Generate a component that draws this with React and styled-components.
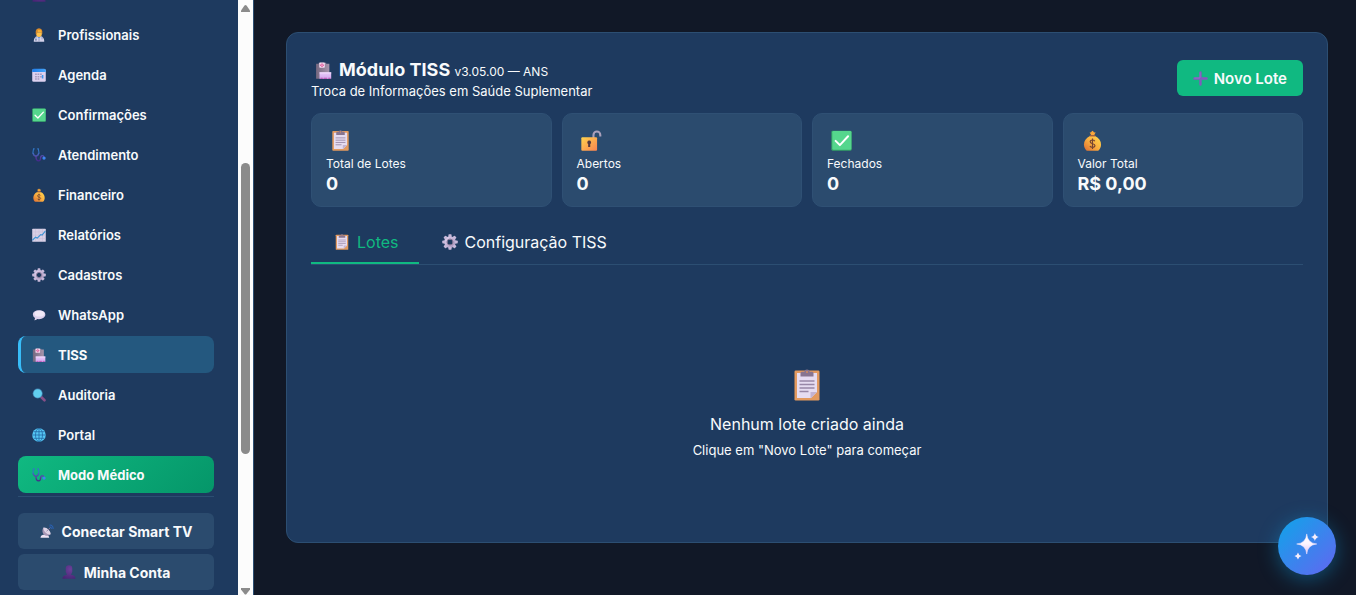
import React from 'react';
import styled, { createGlobalStyle, css, ThemeProvider } from 'styled-components';

const theme = {
  page: '#111827',
  panel: '#1e3a5f',
  raised: '#2b4b6e',
  line: '#2c4e72',
  green: '#10b981',
  text: '#f8fafc',
};

const GlobalStyle = createGlobalStyle`
  *, *::before, *::after {
    box-sizing: border-box;
  }
  body {
    margin: 0;
    background: ${theme.page};
    color: ${theme.text};
    font-family: Inter, 'Liberation Sans', sans-serif;
    font-size: 14px;
  }
  button {
    font-family: inherit;
    color: inherit;
    border: 0;
    cursor: pointer;
  }
  h1, p {
    margin: 0;
  }
`;

/* ---------- icons ---------- */

const Svg = styled.svg`
  display: block;
  flex: none;
  width: ${({ $size }) => $size}px;
  height: ${({ $size }) => $size}px;
`;

const Icon = ({ size = 16, children }) => (
  <Svg $size={size} viewBox="0 0 32 32" aria-hidden="true">
    {children}
  </Svg>
);

const Defs = styled.svg`
  position: absolute;
`;

const Gradients = () => (
  <Defs width="0" height="0" aria-hidden="true">
    <defs>
      <linearGradient id="gold" x1="1" y1="0" x2="0" y2="1">
        <stop offset="0" stopColor="#ffd84d" />
        <stop offset="0.5" stopColor="#fbb040" />
        <stop offset="1" stopColor="#dd6b32" />
      </linearGradient>
      <linearGradient id="lock" x1="0" y1="0" x2="1" y2="1">
        <stop offset="0" stopColor="#ffd34d" />
        <stop offset="1" stopColor="#fb8350" />
      </linearGradient>
      <linearGradient id="gear" x1="0" y1="0" x2="1" y2="1">
        <stop offset="0" stopColor="#e0d2f0" />
        <stop offset="1" stopColor="#a994bb" />
      </linearGradient>
      <linearGradient id="scope" x1="0" y1="0" x2="0" y2="1">
        <stop offset="0" stopColor="#3a6fc0" />
        <stop offset="0.5" stopColor="#5b3fa0" />
        <stop offset="1" stopColor="#44288c" />
      </linearGradient>
      <linearGradient id="header" x1="0" y1="0" x2="1" y2="0">
        <stop offset="0" stopColor="#1f7ce8" />
        <stop offset="1" stopColor="#45a5fa" />
      </linearGradient>
      <linearGradient id="hospital" x1="0" y1="0" x2="1" y2="0">
        <stop offset="0" stopColor="#74677f" />
        <stop offset="1" stopColor="#a795ad" />
      </linearGradient>
      <linearGradient id="annex" x1="0" y1="0" x2="0" y2="1">
        <stop offset="0" stopColor="#e9cdfb" />
        <stop offset="1" stopColor="#d3a6ee" />
      </linearGradient>
      <radialGradient id="person" cx="0.6" cy="0.3" r="0.9">
        <stop offset="0" stopColor="#6b4099" />
        <stop offset="1" stopColor="#432270" />
      </radialGradient>
      <linearGradient id="spark" x1="0" y1="0" x2="0" y2="1">
        <stop offset="0" stopColor="#fff" />
        <stop offset="0.5" stopColor="#fbf4ff" />
        <stop offset="1" stopColor="#dcc0f6" />
      </linearGradient>
    </defs>
  </Defs>
);

const Clipboard = ({ size }) => (
  <Icon size={size}>
    <rect x="3.5" y="1.5" width="25" height="30" rx="1.2" fill="#e39a5f" />
    <path d="M6 4h20v19l-6 6H6z" fill="#e6dcf1" />
    <path d="M19.5 29.5v-6.5H26z" fill="#c3b3d2" />
    <path d="M9.5 7.5V4.2q0-1.4 1.5-1.4h2.3q.3-2.3 2.7-2.3t2.7 2.3H21q1.5 0 1.5 1.4v3.300z" fill="#887590" />
    <circle cx="16" cy="3" r="1" fill="#d68e5b" />
    <path d="M8.500 12h15M8.500 15.500h15M8.500 19h15M8.500 22.500h9" stroke="#9887a7" strokeWidth="1.300" />
  </Icon>
);

const CheckBox = ({ size }) => (
  <Icon size={size}>
    <rect x="0.500" y="1" width="31" height="30.500" rx="2" fill="#35a567" />
    <rect x="2" y="1.500" width="29" height="28.500" rx="2" fill="#55d68d" />
    <path d="M7 16.500l6.500 6.500L26 9.500" fill="none" stroke="#fff" strokeWidth="3" strokeLinecap="round" strokeLinejoin="round" />
  </Icon>
);

const MoneyBag = ({ size }) => (
  <Icon size={size}>
    <path d="M12 9h8c6 3 9 7.500 9 13 0 4-1.700 7.500-4.200 9.500H7.200C4.700 29.500 3 26 3 22c0-5.500 3-10 9-13z" fill="url(#gold)" />
    <path d="M11.500 3.500q2 1 3.500-1.500 1-1.500 2 0 1.500 2.500 4 1.500l-2.500 4.500h-4.500z" fill="#f9a63a" />
    <path d="M12.500 9h7" stroke="#b7653a" strokeWidth="2" strokeLinecap="round" />
    <path d="M19.500 17c-.7-1.300-1.800-1.800-3.500-1.800-2.200 0-3.500 1-3.500 2.800 0 4 7.200 1.800 7.200 5.600 0 1.800-1.500 2.900-3.700 2.900-2 0-3.300-.7-3.900-2.100M16 13v16" fill="none" stroke="#754332" strokeWidth="1.800" />
  </Icon>
);

const Padlock = ({ size }) => (
  <Icon size={size}>
    <path d="M19 12V7.500a5.200 5.200 0 0 1 10.400 0V10" fill="none" stroke="#aaa0bb" strokeWidth="3.200" />
    <rect x="0.500" y="11" width="24" height="20.500" rx="1.500" fill="url(#lock)" />
    <path d="M12.500 16a3 3 0 0 1 1.600 5.500v4.500h-3.200v-4.500A3 3 0 0 1 12.500 16z" fill="#55383f" />
  </Icon>
);

const Gear = ({ size }) => (
  <Icon size={size}>
    <circle cx="16" cy="16" r="8.500" fill="none" stroke="url(#gear)" strokeWidth="6.500" />
    {[0, 45, 90, 135, 180, 225, 270, 315].map(angle => (
      <rect key={angle} x="12.800" y="0.500" width="6.400" height="6" rx="1.500" fill="#c8b9da" transform={`rotate(${angle} 16 16)`} />
    ))}
    <circle cx="16" cy="16" r="6" fill="none" stroke="#80708f" strokeWidth="1.800" />
  </Icon>
);

const Hospital = ({ size }) => (
  <Icon size={size}>
    <path d="M2 3.500h5V1.500h14v2h6v28H2z" fill="url(#hospital)" />
    <rect x="8" y="1" width="10.500" height="10" rx="1.500" fill="#f1d9ee" />
    <path d="M13.200 2.600v7M9.700 6.100h7" stroke="#e0599c" strokeWidth="2.800" />
    <circle cx="13.200" cy="6.100" r="1.200" fill="#f6d3e8" />
    <rect x="8.500" y="19.500" width="22" height="12" fill="url(#annex)" />
    <path d="M8.500 20.500h22" stroke="#f1dcfd" strokeWidth="2" />
    <path d="M10.500 30.500h4M16.500 30.500h6M25 30.500h4" stroke="#c04cb4" strokeWidth="2" />
  </Icon>
);

const Doctor = ({ size }) => (
  <Icon size={size}>
    <path d="M4 31.500c0-9 4-13.500 12-13.500s12 4.500 12 13.500z" fill="#d3d2ea" />
    <path d="M11 18l5 7 5-7z" fill="#6f99dc" />
    <path d="M9 20v6M23 20v6M16 25v6" stroke="#7f8bb2" strokeWidth="1.600" />
    <circle cx="9" cy="27" r="2" fill="#7182a9" />
    <path d="M9.500 9.500h13v4q0 7-6.500 7t-6.500-7z" fill="#ffc14a" />
    <path d="M8.500 14V7q1-6 7.500-6.500 6.500.5 7.500 6.500v7l-2.500-5q-5 1-8-1.500L11 14z" fill="#d98a2c" />
    <path d="M12 9l2-5 7 1 1 5z" fill="#f9b034" />
  </Icon>
);

const Calendar = ({ size }) => (
  <Icon size={size}>
    <rect x="0.500" y="3" width="31" height="28.500" rx="3" fill="#ddd1ef" />
    <path d="M.5 9V5Q.5 1.500 4 1.500h24q3.500 0 3.500 3.500v4z" fill="url(#header)" />
    <path d="M7 12.500h4V16H7zM12.700 12.500h4V16h-4zM18.400 12.500h4V16h-4zM7 18h4v3.500H7zM12.700 18h4v3.500h-4zM18.400 18h4v3.500h-4zM7 23.500h4V27H7zM12.700 23.500h4V27h-4z" fill="#a89cbe" />
    <path d="M22.500 16h3.500v8h-3.500z" fill="#3e98ee" />
  </Icon>
);

const Stethoscope = ({ size }) => (
  <Icon size={size}>
    <path d="M6 2H3.500L2 11q1 6 7 8 6-2 7-8l-1.500-9H12" fill="none" stroke="#3177c7" strokeWidth="2.400" />
    <path d="M2.500 11q1 7 6.500 8 5.500-1 6.500-8M9 19c0 7 2 10.500 6.500 10.500 7 0 1-12 8-12 3 0 3.500 2 3.500 4" fill="none" stroke="url(#scope)" strokeWidth="3" />
    <circle cx="27.500" cy="23" r="3.800" fill="#3f83f0" />
  </Icon>
);

const Chart = ({ size }) => (
  <Icon size={size}>
    <rect x="0.500" y="1.500" width="31" height="30" rx="1.500" fill="#d9d0e6" />
    <path d="M8 2v28M16 2v28M24 2v28M1 9h30M1 16.500h30M1 24h30" stroke="#c5b9d3" strokeWidth="1" />
    <path d="M1 28l7-7 4 2 8-8 3 1L30.500 7" fill="none" stroke="#3a93d4" strokeWidth="2.600" />
  </Icon>
);

const Bubble = ({ size }) => (
  <Icon size={size}>
    <path d="M16 5c8.500 0 14.500 4.200 14.500 10S24.500 25.500 16 25.500q-2 0-4-.3-2.500 3-7 3 2-2.200 1.800-5.200Q2 20 2 15C2 9.200 7.500 5 16 5z" fill="#ddd0ec" />
    <ellipse cx="17" cy="13" rx="11" ry="6.500" fill="#f0e8f7" />
  </Icon>
);

const Lens = ({ size }) => (
  <Icon size={size}>
    <path d="M21 20.500l7.500 7.500" stroke="#855088" strokeWidth="6" strokeLinecap="round" />
    <circle cx="13" cy="12.500" r="11.500" fill="#3f7fae" />
    <circle cx="13" cy="12.500" r="9.800" fill="#61cff0" />
  </Icon>
);

const Globe = ({ size }) => (
  <Icon size={size}>
    <circle cx="16" cy="16" r="15.500" fill="#55c7f5" />
    <path d="M16 1v30M1 16h30M4 8.500h24M4 23.500h24" stroke="#21649f" strokeWidth="1.700" />
    <ellipse cx="16" cy="16" rx="8" ry="15" fill="none" stroke="#21649f" strokeWidth="1.700" />
  </Icon>
);

const Dish = ({ size }) => (
  <Icon size={size}>
    <path d="M1 31.500q0-6 6-7h8q6 1 6 7z" fill="#efe4f5" />
    <path d="M8 8C4 14 5 22 11 25.500c5 2.500 10 1 13-2z" fill="#a897b5" />
    <path d="M8 8c3-1 8 1 11.500 5 4 4 6 8.500 4.500 10.500-3 1.500-8-.5-11.500-4S7 11 8 8z" fill="#ded3e6" />
    <path d="M15 16.500L24 8" stroke="#8f7c9e" strokeWidth="2" />
    <path d="M22.500 2.500q7 .5 7.500 8M22.500 6.500q3.300.5 3.500 4" fill="none" stroke="#2a62b4" strokeWidth="2.400" strokeLinecap="round" />
  </Icon>
);

const Person = ({ size }) => (
  <Icon size={size}>
    <path d="M1 31.500c0-6 3.500-8.500 10.500-9.500L8.500 16V8q0-7.500 7.500-7.500T23.500 8v8l-3 6c7 1 10.500 3.500 10.500 9.500z" fill="url(#person)" />
  </Icon>
);

const Plus = ({ size }) => (
  <Icon size={size}>
    <path d="M16 3v26M3 16h26" stroke="#8259be" strokeWidth="5" strokeLinecap="round" />
    <path d="M15 3v12H3" fill="none" stroke="#a47dd8" strokeWidth="1.200" />
  </Icon>
);

const Sparkles = ({ size }) => (
  <Icon size={size}>
    <path d="M15.700 2.200q.9 10.600 11.500 11.500-10.600.9-11.500 11.500-.9-10.600-11.500-11.500 10.600-.9 11.500-11.500z" fill="url(#spark)" stroke="#efe2fb" strokeWidth="0.600" />
    <path d="M25 1q.8 4 4.500 4.700-3.700.8-4.500 4.700-.8-3.900-4.500-4.700Q24.200 5 25 1z" fill="#f5eefc" />
    <path d="M5.700 23.400q.8 3.400 4 4-3.200.6-4 4-.8-3.400-4-4 3.200-.6 4-4z" fill="#f5eefc" />
  </Icon>
);

/* ---------- sidebar ---------- */

const Layout = styled.div`
  display: flex;
  min-height: 100vh;
`;

const Sidebar = styled.aside`
  display: flex;
  flex: none;
  position: sticky;
  top: 0;
  width: 254px;
  height: 100vh;
  background: ${({ theme }) => theme.panel};
  border-right: 1px solid ${({ theme }) => theme.line};
`;

const SidebarContent = styled.div`
  display: flex;
  flex: 1;
  flex-direction: column;
  justify-content: flex-end;
  overflow: hidden;
  padding: 0 24px 5px 18px;
`;

const Nav = styled.nav`
  display: flex;
  flex-direction: column;
  gap: 3px;
  padding-bottom: 3px;
  border-bottom: 1px solid ${({ theme }) => theme.line};
`;

const NavLink = styled.a`
  display: flex;
  flex: none;
  align-items: center;
  gap: 12px;
  height: 37px;
  padding: 0 11px;
  border-left: 3px solid transparent;
  border-radius: 8px;
  color: inherit;
  font-size: 13px;
  font-weight: 600;
  line-height: 20px;
  text-decoration: none;

  ${({ $active }) =>
    $active &&
    css`
      background: #24587f;
      border-left-color: #38bdf8;
      font-weight: 700;
    `}

  ${({ $medical }) =>
    $medical &&
    css`
      padding: 0 14px;
      border-left: 0;
      background: linear-gradient(135deg, #10b981, #059669);
      font-weight: 700;
    `}
`;

const SidebarActions = styled.div`
  display: flex;
  flex-direction: column;
  gap: 5px;
  margin-top: 16px;
`;

const SidebarButton = styled.button`
  display: flex;
  align-items: center;
  justify-content: center;
  gap: 8px;
  height: 36px;
  border-radius: 6px;
  background: ${({ theme }) => theme.raised};
  font-size: 14px;
  font-weight: 700;
`;

const Rail = styled.div`
  display: flex;
  flex: none;
  flex-direction: column;
  align-items: center;
  justify-content: space-between;
  width: 15px;
  padding: 4px 0 0;
  background: #fcfcfc;
`;

const Track = styled.div`
  flex: 1;
  width: 9px;
  display: grid;
  grid-template-rows: 151fr 291fr 133fr;
`;

const Thumb = styled.div`
  grid-row: 2;
  border-radius: 5px;
  background: #8b8b8b;
`;

const Arrow = styled.svg`
  display: block;
  width: 9px;
  height: 8px;
  fill: #8b8b8b;
`;

/* ---------- module ---------- */

const Main = styled.main`
  flex: 1;
  min-width: 0;
  padding: 32px 28px 32px 32px;
`;

const Card = styled.section`
  padding: 24px;
  border: 1px solid ${({ theme }) => theme.line};
  border-radius: 12px;
  background: ${({ theme }) => theme.panel};
`;

const CardHeader = styled.header`
  display: flex;
  align-items: center;
  justify-content: space-between;
  margin-bottom: 14px;
`;

const Title = styled.h1`
  display: flex;
  align-items: center;
  gap: 7px;
  padding-left: 4px;
  font-size: 18px;
  font-weight: 700;
  line-height: 26px;
`;

const Version = styled.small`
  font-size: 12px;
  font-weight: 400;
  line-height: 16px;
`;

const Subtitle = styled.p`
  font-size: 13px;
  line-height: 16px;
`;

const NewButton = styled.button`
  display: flex;
  align-items: center;
  gap: 6px;
  height: 36px;
  padding: 0 16px;
  border-radius: 6px;
  background: ${({ theme }) => theme.green};
  font-size: 15px;
  font-weight: 600;
`;

const Stats = styled.div`
  display: grid;
  grid-template-columns: repeat(4, 1fr);
  gap: 10px;
`;

const StatCard = styled.div`
  padding: 16px 14px 11px;
  border: 1px solid #2f5074;
  border-radius: 10px;
  background: ${({ theme }) => theme.raised};
`;

const StatIcon = styled.div`
  padding-left: 4px;
`;

const StatLabel = styled.p`
  margin-top: 4px;
  font-size: 12px;
  line-height: 18px;
`;

const StatValue = styled.p`
  font-size: 18px;
  font-weight: 700;
  line-height: 22px;
`;

const Tabs = styled.div`
  display: flex;
  margin-top: 14px;
  border-bottom: 1px solid ${({ theme }) => theme.line};
`;

const Tab = styled.button`
  display: flex;
  align-items: center;
  gap: 7px;
  height: 43px;
  padding: 0 20px 0 23px;
  border-bottom: 2px solid ${({ $active, theme }) => ($active ? theme.green : 'transparent')};
  background: none;
  color: ${({ $active, theme }) => ($active ? theme.green : 'inherit')};
  font-size: 16px;
`;

const Empty = styled.div`
  display: flex;
  flex-direction: column;
  align-items: center;
  padding: 104px 0 58px;
  text-align: center;
`;

const EmptyTitle = styled.p`
  margin-top: 11px;
  font-size: 16px;
  line-height: 24px;
`;

const EmptyHint = styled.p`
  margin-top: 4px;
  font-size: 13px;
  line-height: 20px;
`;

const AssistantButton = styled.button`
  position: fixed;
  right: 20px;
  bottom: 20px;
  display: flex;
  align-items: center;
  justify-content: center;
  width: 58px;
  height: 58px;
  padding: 0;
  border-radius: 50%;
  background: linear-gradient(135deg, #0ea5e9, #6366f1);
  box-shadow: 0 4px 20px rgba(14, 165, 233, 0.4);
`;

const navItems = [
  { label: 'Profissionais', icon: Doctor },
  { label: 'Agenda', icon: Calendar },
  { label: 'Confirmações', icon: CheckBox },
  { label: 'Atendimento', icon: Stethoscope },
  { label: 'Financeiro', icon: MoneyBag },
  { label: 'Relatórios', icon: Chart },
  { label: 'Cadastros', icon: Gear },
  { label: 'WhatsApp', icon: Bubble },
  { label: 'TISS', icon: Hospital, active: true },
  { label: 'Auditoria', icon: Lens },
  { label: 'Portal', icon: Globe },
  { label: 'Modo Médico', icon: Stethoscope, medical: true },
];

const stats = [
  { label: 'Total de Lotes', value: '0', icon: Clipboard },
  { label: 'Abertos', value: '0', icon: Padlock },
  { label: 'Fechados', value: '0', icon: CheckBox },
  { label: 'Valor Total', value: 'R$ 0,00', icon: MoneyBag },
];

const App = () => (
  <ThemeProvider theme={theme}>
    <GlobalStyle />
    <Gradients />
    <Layout>
      <Sidebar>
        <SidebarContent>
          <Nav>
            <NavLink as="div">
              <Person size={14} />
            </NavLink>
            {navItems.map(({ label, icon: ItemIcon, active, medical }) => (
              <NavLink key={label} href="#" $active={active} $medical={medical}>
                <ItemIcon size={14} />
                {label}
              </NavLink>
            ))}
          </Nav>
          <SidebarActions>
            <SidebarButton type="button">
              <Dish size={14} />
              Conectar Smart TV
            </SidebarButton>
            <SidebarButton type="button">
              <Person size={14} />
              Minha Conta
            </SidebarButton>
          </SidebarActions>
        </SidebarContent>
        <Rail aria-hidden="true">
          <Arrow viewBox="0 0 9 8">
            <path d="M3.500 1.500q1-1.200 2 0L9 6.500V8H0V6.500z" />
          </Arrow>
          <Track>
            <Thumb />
          </Track>
          <Arrow viewBox="0 0 9 8">
            <path d="M0 1h9v1.500L5.500 7q-1 1.200-2 0L0 2.500z" />
          </Arrow>
        </Rail>
      </Sidebar>
      <Main>
        <Card>
          <CardHeader>
            <div>
              <Title>
                <Hospital size={17} />
                <span>
                  Módulo TISS <Version>v3.05.00 — ANS</Version>
                </span>
              </Title>
              <Subtitle>Troca de Informações em Saúde Suplementar</Subtitle>
            </div>
            <NewButton type="button">
              <Plus size={15} />
              Novo Lote
            </NewButton>
          </CardHeader>
          <Stats>
            {stats.map(({ label, value, icon: ItemIcon }) => (
              <StatCard key={label}>
                <StatIcon>
                  <ItemIcon size={21} />
                </StatIcon>
                <StatLabel>{label}</StatLabel>
                <StatValue>{value}</StatValue>
              </StatCard>
            ))}
          </Stats>
          <Tabs role="tablist">
            <Tab type="button" role="tab" aria-selected="true" $active>
              <Clipboard size={16} />
              Lotes
            </Tab>
            <Tab type="button" role="tab" aria-selected="false">
              <Gear size={16} />
              Configuração TISS
            </Tab>
          </Tabs>
          <Empty>
            <Clipboard size={32} />
            <EmptyTitle>Nenhum lote criado ainda</EmptyTitle>
            <EmptyHint>Clique em "Novo Lote" para começar</EmptyHint>
          </Empty>
        </Card>
      </Main>
    </Layout>
    <AssistantButton type="button" aria-label="Assistente">
      <Sparkles size={28} />
    </AssistantButton>
  </ThemeProvider>
);

export default App;
